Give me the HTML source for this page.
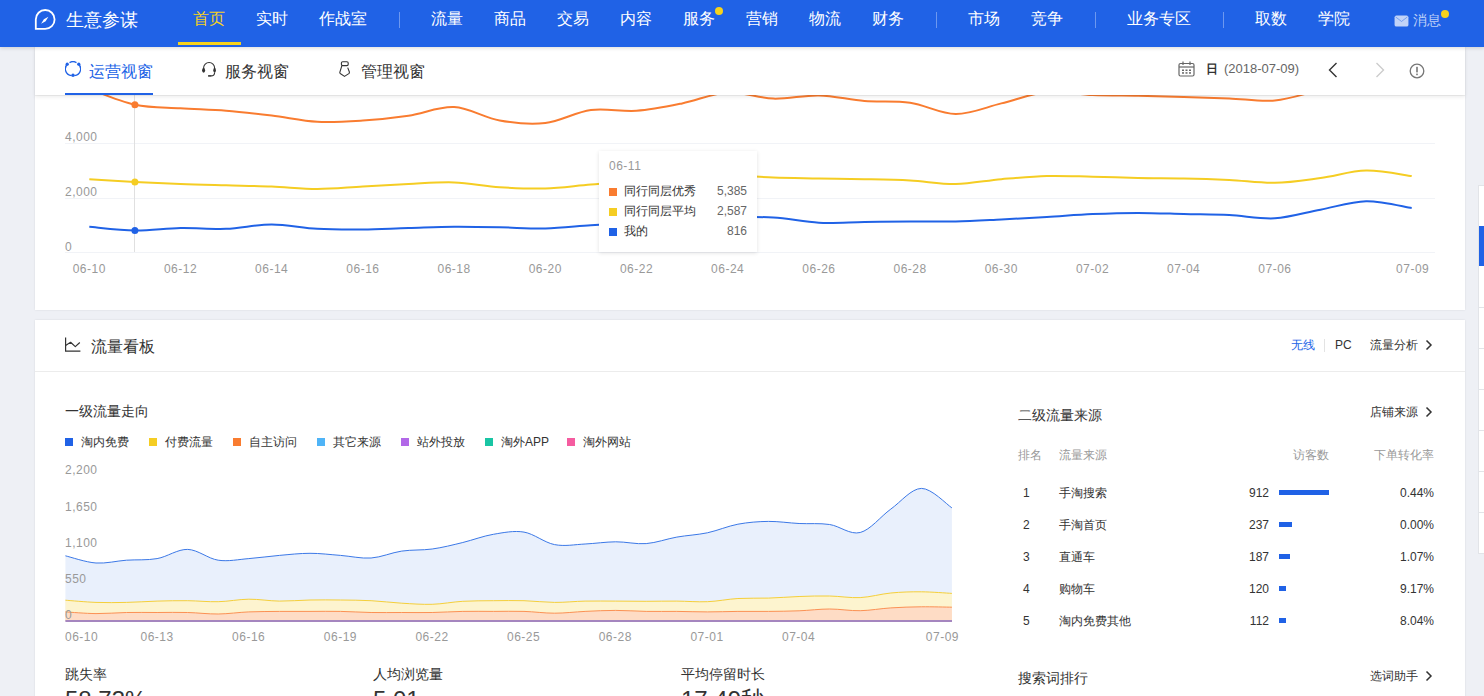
<!DOCTYPE html>
<html><head><meta charset="utf-8">
<style>
*{margin:0;padding:0;box-sizing:border-box}
html,body{width:1484px;height:696px;overflow:hidden}
body{background:#eef0f5;font-family:"Liberation Sans",sans-serif;position:relative;color:#333}
.abs{position:absolute}
#nav{position:absolute;left:0;top:0;width:1484px;height:47px;background:#2062e6;z-index:10;box-shadow:0 1px 4px rgba(0,0,0,.15)}
#nav .it{position:absolute;top:9px;font-size:16px;line-height:20px;color:#fff;white-space:nowrap}
#nav .sep{position:absolute;top:12px;width:1px;height:16px;background:rgba(255,255,255,.35)}
#nav .dot{position:absolute;width:8px;height:8px;border-radius:50%;background:#f7d21c}
#tabs{position:absolute;left:35px;top:47px;width:1430px;height:48px;background:#fff;z-index:5;box-shadow:0 1px 0 rgba(0,0,0,.05),0 2px 4px rgba(0,0,0,.08)}
.card{position:absolute;background:#fff;box-shadow:0 0 2px rgba(0,0,0,.1)}
.t12{font-size:12px;line-height:14px;white-space:nowrap}
.t13{font-size:13px;line-height:15px;white-space:nowrap}
.t14{font-size:14px;line-height:16px;white-space:nowrap}
.t16{font-size:16px;line-height:18px;white-space:nowrap}
.gray{color:#999}
.num{letter-spacing:.5px}
svg{position:absolute;left:0;top:0}
</style></head><body>

<!-- card 1 (chart, scrolled) -->
<div class="card" style="left:35px;top:0;width:1430px;height:310px"></div>
<svg width="1484" height="696" style="z-index:1">
  <g stroke="#f1f3f7" stroke-width="1">
    <line x1="65" y1="143.5" x2="1435" y2="143.5"/>
    <line x1="65" y1="198.5" x2="1435" y2="198.5"/>
    <line x1="65" y1="252.5" x2="1435" y2="252.5"/>
  </g>
  <line x1="134.5" y1="95" x2="134.5" y2="252" stroke="#e0e0e0" stroke-width="1"/>
  <path d="M89.3,89.0 C96.9,91.6 119.7,101.5 134.9,104.7 C150.1,107.9 165.3,107.3 180.5,108.3 C195.7,109.3 210.9,109.6 226.1,110.8 C241.3,112.0 256.5,113.8 271.7,115.6 C286.9,117.4 302.1,121.0 317.3,121.8 C332.5,122.6 347.7,121.5 362.9,120.5 C378.1,119.5 393.3,117.9 408.5,115.7 C423.7,113.5 438.9,106.3 454.1,107.1 C469.3,107.9 484.5,117.8 499.7,120.5 C514.9,123.2 530.1,124.8 545.3,123.0 C560.5,121.2 575.7,112.0 590.9,110.0 C606.1,108.0 621.3,111.9 636.5,110.8 C651.7,109.7 666.9,106.5 682.1,103.4 C697.3,100.4 712.5,93.3 727.7,92.5 C742.9,91.7 758.1,98.1 773.3,98.6 C788.5,99.1 803.7,95.0 818.9,95.4 C834.1,95.8 849.3,99.8 864.5,101.0 C879.7,102.2 894.9,100.5 910.1,102.7 C925.3,104.9 940.5,113.9 955.7,114.0 C970.9,114.1 986.1,107.1 1001.3,103.4 C1016.5,99.7 1031.7,93.4 1046.9,92.0 C1062.1,90.6 1077.3,94.4 1092.5,95.0 C1107.7,95.6 1122.9,95.5 1138.1,95.8 C1153.3,96.1 1168.5,96.5 1183.7,96.9 C1198.9,97.3 1214.1,97.8 1229.3,98.4 C1244.5,99.0 1259.7,101.9 1274.9,100.5 C1290.1,99.1 1305.3,93.4 1320.5,90.0 C1335.7,86.6 1350.9,80.8 1366.1,80.0 C1381.3,79.2 1404.1,84.2 1411.7,85.0" fill="none" stroke="#f97c30" stroke-width="2"/>
  <path d="M89.3,179.2 C96.9,179.6 119.7,181.1 134.9,181.9 C150.1,182.7 165.3,183.4 180.5,184.0 C195.7,184.6 210.9,184.9 226.1,185.3 C241.3,185.7 256.5,185.9 271.7,186.5 C286.9,187.1 302.1,189.0 317.3,189.0 C332.5,189.0 347.7,187.3 362.9,186.5 C378.1,185.7 393.3,184.7 408.5,184.0 C423.7,183.3 438.9,181.9 454.1,182.4 C469.3,182.9 484.5,186.2 499.7,187.2 C514.9,188.2 530.1,188.9 545.3,188.5 C560.5,188.1 575.7,185.7 590.9,184.5 C606.1,183.3 621.3,182.7 636.5,181.5 C651.7,180.3 666.9,178.5 682.1,177.5 C697.3,176.5 712.5,175.5 727.7,175.5 C742.9,175.5 758.1,177.0 773.3,177.5 C788.5,178.0 803.7,178.1 818.9,178.4 C834.1,178.7 849.3,178.8 864.5,179.2 C879.7,179.5 894.9,179.7 910.1,180.5 C925.3,181.3 940.5,184.2 955.7,184.0 C970.9,183.8 986.1,180.5 1001.3,179.2 C1016.5,177.9 1031.7,176.4 1046.9,176.0 C1062.1,175.6 1077.3,176.4 1092.5,176.7 C1107.7,177.0 1122.9,177.7 1138.1,178.0 C1153.3,178.3 1168.5,178.1 1183.7,178.4 C1198.9,178.7 1214.1,179.2 1229.3,179.9 C1244.5,180.6 1259.7,183.1 1274.9,182.8 C1290.1,182.5 1305.3,180.0 1320.5,178.0 C1335.7,176.0 1350.9,170.9 1366.1,170.6 C1381.3,170.3 1404.1,175.1 1411.7,176.0" fill="none" stroke="#f5cd23" stroke-width="2"/>
  <path d="M89.3,226.8 C96.9,227.4 119.7,230.3 134.9,230.5 C150.1,230.7 165.3,228.3 180.5,228.0 C195.7,227.7 210.9,229.4 226.1,228.8 C241.3,228.2 256.5,224.4 271.7,224.4 C286.9,224.4 302.1,228.0 317.3,228.8 C332.5,229.7 347.7,229.6 362.9,229.5 C378.1,229.4 393.3,228.4 408.5,228.0 C423.7,227.6 438.9,226.9 454.1,226.8 C469.3,226.7 484.5,227.0 499.7,227.3 C514.9,227.6 530.1,228.8 545.3,228.5 C560.5,228.2 575.7,226.3 590.9,225.3 C606.1,224.3 621.3,223.4 636.5,222.5 C651.7,221.6 666.9,220.8 682.1,220.0 C697.3,219.2 712.5,217.9 727.7,217.5 C742.9,217.1 758.1,216.6 773.3,217.5 C788.5,218.4 803.7,221.9 818.9,222.7 C834.1,223.4 849.3,222.2 864.5,222.0 C879.7,221.8 894.9,221.5 910.1,221.4 C925.3,221.3 940.5,221.7 955.7,221.4 C970.9,221.1 986.1,220.2 1001.3,219.5 C1016.5,218.8 1031.7,217.9 1046.9,217.0 C1062.1,216.1 1077.3,214.8 1092.5,214.1 C1107.7,213.4 1122.9,212.9 1138.1,212.9 C1153.3,212.9 1168.5,213.6 1183.7,214.0 C1198.9,214.4 1214.1,214.4 1229.3,215.1 C1244.5,215.8 1259.7,219.2 1274.9,218.3 C1290.1,217.4 1305.3,212.5 1320.5,209.7 C1335.7,206.8 1350.9,201.5 1366.1,201.2 C1381.3,200.9 1404.1,206.9 1411.7,208.0" fill="none" stroke="#2062e6" stroke-width="2"/>
  <circle cx="134.9" cy="104.7" r="3.5" fill="#f97c30"/>
  <circle cx="134.9" cy="181.9" r="3.5" fill="#f5cd23"/>
  <circle cx="134.9" cy="230.5" r="3.5" fill="#2062e6"/>
</svg>

<div class="abs t12 gray num" style="left:65px;top:130px">4,000</div>
<div class="abs t12 gray num" style="left:65px;top:185px">2,000</div>
<div class="abs t12 gray num" style="left:65px;top:240px">0</div>
<div class="abs t12 gray num" style="left:59.3px;top:262px;width:60px;text-align:center">06-10</div>
<div class="abs t12 gray num" style="left:150.5px;top:262px;width:60px;text-align:center">06-12</div>
<div class="abs t12 gray num" style="left:241.7px;top:262px;width:60px;text-align:center">06-14</div>
<div class="abs t12 gray num" style="left:332.9px;top:262px;width:60px;text-align:center">06-16</div>
<div class="abs t12 gray num" style="left:424.1px;top:262px;width:60px;text-align:center">06-18</div>
<div class="abs t12 gray num" style="left:515.3px;top:262px;width:60px;text-align:center">06-20</div>
<div class="abs t12 gray num" style="left:606.5px;top:262px;width:60px;text-align:center">06-22</div>
<div class="abs t12 gray num" style="left:697.7px;top:262px;width:60px;text-align:center">06-24</div>
<div class="abs t12 gray num" style="left:788.9px;top:262px;width:60px;text-align:center">06-26</div>
<div class="abs t12 gray num" style="left:880.1px;top:262px;width:60px;text-align:center">06-28</div>
<div class="abs t12 gray num" style="left:971.3px;top:262px;width:60px;text-align:center">06-30</div>
<div class="abs t12 gray num" style="left:1062.5px;top:262px;width:60px;text-align:center">07-02</div>
<div class="abs t12 gray num" style="left:1153.7px;top:262px;width:60px;text-align:center">07-04</div>
<div class="abs t12 gray num" style="left:1244.9px;top:262px;width:60px;text-align:center">07-06</div>
<div class="abs t12 gray num" style="left:1382.7px;top:262px;width:60px;text-align:center">07-09</div>
<div class="abs" style="left:599px;top:151px;width:158px;height:101px;background:#fff;box-shadow:0 1px 4px rgba(0,0,0,.12);z-index:2">
  <div class="abs t12 gray num" style="left:10px;top:8px">06-11</div>
  <div class="abs" style="left:10px;top:37px;width:8px;height:8px;background:#f97c30"></div>
  <div class="abs t12" style="left:25px;top:33px;color:#333">同行同层优秀</div>
  <div class="abs t12" style="right:10px;top:33px;color:#666">5,385</div>
  <div class="abs" style="left:10px;top:57px;width:8px;height:8px;background:#f5cd23"></div>
  <div class="abs t12" style="left:25px;top:53px;color:#333">同行同层平均</div>
  <div class="abs t12" style="right:10px;top:53px;color:#666">2,587</div>
  <div class="abs" style="left:10px;top:77px;width:8px;height:8px;background:#2062e6"></div>
  <div class="abs t12" style="left:25px;top:73px;color:#333">我的</div>
  <div class="abs t12" style="right:10px;top:73px;color:#666">816</div>
</div>
<div class="card" style="left:35px;top:320px;width:1430px;height:400px;z-index:1">
  <svg width="18" height="16" style="left:29px;top:17px" viewBox="0 0 18 16">
    <path d="M1.6,0.6 L1.6,14.2 L16.4,14.2" fill="none" stroke="#333" stroke-width="1.2"/>
    <path d="M1.6,8.4 L6.6,5.3 L11.3,9.6 L15.8,5.5" fill="none" stroke="#333" stroke-width="1.2" stroke-linejoin="round"/>
  </svg>
  <div class="abs t16" style="left:56px;top:18px;color:#333">流量看板</div>
  <div class="abs t12" style="left:1256px;top:18px;color:#2062e6">无线</div>
  <div class="abs" style="left:1289px;top:19px;width:1px;height:13px;background:#e3e3e3"></div>
  <div class="abs t12" style="left:1300px;top:18px;color:#333">PC</div>
  <div class="abs t12" style="left:1335px;top:18px;color:#333">流量分析</div>
  <svg width="8" height="12" style="left:1390px;top:19px" viewBox="0 0 8 12"><path d="M1.5,1.5 L6,6 L1.5,10.5" fill="none" stroke="#333" stroke-width="1.5"/></svg>
  <div class="abs" style="left:0;top:51px;width:1430px;height:1px;background:#ececec"></div>

  <div class="abs t14" style="left:30px;top:83px;color:#333">一级流量走向</div>
  <div class="abs" style="left:30px;top:118px;width:8px;height:8px;background:#2062e6"></div>
  <div class="abs t12" style="left:46px;top:115px;color:#333">淘内免费</div>
  <div class="abs" style="left:114px;top:118px;width:8px;height:8px;background:#f5cd23"></div>
  <div class="abs t12" style="left:130px;top:115px;color:#333">付费流量</div>
  <div class="abs" style="left:198px;top:118px;width:8px;height:8px;background:#f97c30"></div>
  <div class="abs t12" style="left:214px;top:115px;color:#333">自主访问</div>
  <div class="abs" style="left:282px;top:118px;width:8px;height:8px;background:#4fb4f7"></div>
  <div class="abs t12" style="left:298px;top:115px;color:#333">其它来源</div>
  <div class="abs" style="left:366px;top:118px;width:8px;height:8px;background:#b268e8"></div>
  <div class="abs t12" style="left:382px;top:115px;color:#333">站外投放</div>
  <div class="abs" style="left:450px;top:118px;width:8px;height:8px;background:#19c5a4"></div>
  <div class="abs t12" style="left:466px;top:115px;color:#333">淘外APP</div>
  <div class="abs" style="left:532px;top:118px;width:8px;height:8px;background:#f55ca0"></div>
  <div class="abs t12" style="left:548px;top:115px;color:#333">淘外网站</div>
  <div class="abs t12 gray num" style="left:30px;top:310px">06-10</div>
  <div class="abs t12 gray num" style="left:92.1px;top:310px;width:60px;text-align:center">06-13</div>
  <div class="abs t12 gray num" style="left:183.7px;top:310px;width:60px;text-align:center">06-16</div>
  <div class="abs t12 gray num" style="left:275.4px;top:310px;width:60px;text-align:center">06-19</div>
  <div class="abs t12 gray num" style="left:367.0px;top:310px;width:60px;text-align:center">06-22</div>
  <div class="abs t12 gray num" style="left:458.6px;top:310px;width:60px;text-align:center">06-25</div>
  <div class="abs t12 gray num" style="left:550.3px;top:310px;width:60px;text-align:center">06-28</div>
  <div class="abs t12 gray num" style="left:642.0px;top:310px;width:60px;text-align:center">07-01</div>
  <div class="abs t12 gray num" style="left:733.6px;top:310px;width:60px;text-align:center">07-04</div>
  <div class="abs t12 gray num" style="left:890.8px;top:310px">07-09</div>
  <div class="abs t14" style="left:30px;top:346px;color:#333">跳失率</div>
  <div class="abs" style="left:30px;top:366px;font-size:24px;line-height:28px;color:#333">58.73%</div>
  <div class="abs t14" style="left:338px;top:346px;color:#333">人均浏览量</div>
  <div class="abs" style="left:338px;top:366px;font-size:24px;line-height:28px;color:#333">5.01</div>
  <div class="abs t14" style="left:646px;top:346px;color:#333">平均停留时长</div>
  <div class="abs" style="left:646px;top:366px;font-size:24px;line-height:28px;color:#333">17.49秒</div>

  <div class="abs t14" style="left:983px;top:87px;color:#333">二级流量来源</div>
  <div class="abs t12" style="left:1335px;top:85px;color:#333">店铺来源</div>
  <svg width="8" height="12" style="left:1390px;top:86px" viewBox="0 0 8 12"><path d="M1.5,1.5 L6,6 L1.5,10.5" fill="none" stroke="#333" stroke-width="1.5"/></svg>
  <div class="abs t12 gray" style="left:983px;top:128px">排名</div>
  <div class="abs t12 gray" style="left:1024px;top:128px">流量来源</div>
  <div class="abs t12 gray" style="left:1258px;top:128px">访客数</div>
  <div class="abs t12 gray" style="left:1339px;top:128px">下单转化率</div>
  <div class="abs t12" style="left:988px;top:165.5px;color:#333">1</div>
  <div class="abs t12" style="left:1024px;top:165.5px;color:#333">手淘搜索</div>
  <div class="abs t12" style="left:1174px;width:60px;text-align:right;top:165.5px;color:#333">912</div>
  <div class="abs" style="left:1244px;top:170.0px;width:50px;height:5px;background:#2062e6"></div>
  <div class="abs t12" style="left:1339px;width:60px;text-align:right;top:165.5px;color:#333">0.44%</div>
  <div class="abs t12" style="left:988px;top:197.5px;color:#333">2</div>
  <div class="abs t12" style="left:1024px;top:197.5px;color:#333">手淘首页</div>
  <div class="abs t12" style="left:1174px;width:60px;text-align:right;top:197.5px;color:#333">237</div>
  <div class="abs" style="left:1244px;top:202.0px;width:13px;height:5px;background:#2062e6"></div>
  <div class="abs t12" style="left:1339px;width:60px;text-align:right;top:197.5px;color:#333">0.00%</div>
  <div class="abs t12" style="left:988px;top:229.5px;color:#333">3</div>
  <div class="abs t12" style="left:1024px;top:229.5px;color:#333">直通车</div>
  <div class="abs t12" style="left:1174px;width:60px;text-align:right;top:229.5px;color:#333">187</div>
  <div class="abs" style="left:1244px;top:234.0px;width:11px;height:5px;background:#2062e6"></div>
  <div class="abs t12" style="left:1339px;width:60px;text-align:right;top:229.5px;color:#333">1.07%</div>
  <div class="abs t12" style="left:988px;top:261.5px;color:#333">4</div>
  <div class="abs t12" style="left:1024px;top:261.5px;color:#333">购物车</div>
  <div class="abs t12" style="left:1174px;width:60px;text-align:right;top:261.5px;color:#333">120</div>
  <div class="abs" style="left:1244px;top:266.0px;width:7px;height:5px;background:#2062e6"></div>
  <div class="abs t12" style="left:1339px;width:60px;text-align:right;top:261.5px;color:#333">9.17%</div>
  <div class="abs t12" style="left:988px;top:293.5px;color:#333">5</div>
  <div class="abs t12" style="left:1024px;top:293.5px;color:#333">淘内免费其他</div>
  <div class="abs t12" style="left:1174px;width:60px;text-align:right;top:293.5px;color:#333">112</div>
  <div class="abs" style="left:1244px;top:298.0px;width:7px;height:5px;background:#2062e6"></div>
  <div class="abs t12" style="left:1339px;width:60px;text-align:right;top:293.5px;color:#333">8.04%</div>
  <div class="abs t14" style="left:983px;top:350px;color:#333">搜索词排行</div>
  <div class="abs t12" style="left:1335px;top:349px;color:#333">选词助手</div>
  <svg width="8" height="12" style="left:1390px;top:350px" viewBox="0 0 8 12"><path d="M1.5,1.5 L6,6 L1.5,10.5" fill="none" stroke="#333" stroke-width="1.5"/></svg>
</div>
<svg width="1484" height="696" style="z-index:2">
  <path d="M65.4,555.8 C70.5,557.0 85.8,562.3 96.0,563.0 C106.2,563.7 116.4,560.9 126.5,560.2 C136.7,559.5 146.9,560.4 157.1,558.6 C167.3,556.8 177.5,549.1 187.7,549.4 C197.9,549.7 208.1,558.7 218.2,560.2 C228.4,561.7 238.6,559.4 248.8,558.6 C259.0,557.8 269.2,556.3 279.4,555.4 C289.6,554.5 299.8,553.3 310.0,553.3 C320.2,553.3 330.3,554.6 340.5,555.4 C350.7,556.2 360.9,558.7 371.1,558.0 C381.3,557.3 391.5,552.6 401.7,551.1 C411.9,549.6 422.1,550.4 432.2,549.0 C442.4,547.6 452.6,545.0 462.8,542.5 C473.0,540.0 483.2,536.0 493.4,534.3 C503.6,532.6 513.8,530.4 524.0,532.1 C534.1,533.8 544.3,542.6 554.5,544.6 C564.7,546.6 574.9,544.5 585.1,544.0 C595.3,543.5 605.5,541.9 615.7,541.8 C625.8,541.7 636.0,544.4 646.2,543.6 C656.4,542.8 666.6,538.9 676.8,537.1 C687.0,535.3 697.2,534.9 707.4,532.8 C717.6,530.6 727.8,526.1 737.9,524.2 C748.1,522.3 758.3,521.5 768.5,521.4 C778.7,521.3 788.9,523.0 799.1,523.5 C809.3,524.0 819.5,523.0 829.6,524.5 C839.8,526.0 850.0,535.1 860.2,532.5 C870.4,529.9 880.6,516.5 890.8,509.1 C901.0,501.8 911.2,488.6 921.4,488.4 C931.5,488.2 946.8,504.6 951.9,507.9 L951.9,621.0 L65.4,621.0 Z" fill="#e9f0fc"/>
  <path d="M65.4,600.2 C70.5,600.6 85.8,602.0 96.0,602.4 C106.2,602.8 116.4,602.6 126.5,602.4 C136.7,602.2 146.9,601.4 157.1,601.1 C167.3,600.8 177.5,600.6 187.7,600.7 C197.9,600.8 208.1,602.0 218.2,601.7 C228.4,601.5 238.6,599.3 248.8,599.2 C259.0,599.1 269.2,601.0 279.4,601.1 C289.6,601.2 299.8,600.2 310.0,600.0 C320.2,599.8 330.3,599.9 340.5,600.0 C350.7,600.1 360.9,600.2 371.1,600.7 C381.3,601.2 391.5,602.6 401.7,603.2 C411.9,603.8 422.1,604.6 432.2,604.3 C442.4,604.0 452.6,601.9 462.8,601.3 C473.0,600.7 483.2,600.8 493.4,600.7 C503.6,600.6 513.8,600.4 524.0,600.7 C534.1,601.0 544.3,602.3 554.5,602.4 C564.7,602.5 574.9,601.3 585.1,601.1 C595.3,600.9 605.5,601.1 615.7,601.1 C625.8,601.1 636.0,601.3 646.2,601.3 C656.4,601.3 666.6,601.0 676.8,601.1 C687.0,601.2 697.2,602.1 707.4,601.7 C717.6,601.3 727.8,599.1 737.9,598.5 C748.1,597.9 758.3,598.4 768.5,598.1 C778.7,597.8 788.9,596.9 799.1,596.5 C809.3,596.1 819.5,595.8 829.6,596.0 C839.8,596.2 850.0,598.1 860.2,597.6 C870.4,597.1 880.6,594.0 890.8,593.0 C901.0,592.0 911.2,591.7 921.4,591.8 C931.5,591.9 946.8,593.1 951.9,593.4 L951.9,621.0 L65.4,621.0 Z" fill="#fdf4cf"/>
  <path d="M65.4,611.9 C70.5,612.2 85.8,613.5 96.0,613.6 C106.2,613.7 116.4,612.7 126.5,612.5 C136.7,612.3 146.9,612.5 157.1,612.5 C167.3,612.5 177.5,612.2 187.7,612.5 C197.9,612.8 208.1,614.1 218.2,614.0 C228.4,613.9 238.6,612.3 248.8,611.9 C259.0,611.5 269.2,611.5 279.4,611.4 C289.6,611.3 299.8,611.4 310.0,611.4 C320.2,611.4 330.3,611.2 340.5,611.4 C350.7,611.6 360.9,612.3 371.1,612.5 C381.3,612.7 391.5,612.5 401.7,612.5 C411.9,612.5 422.1,612.7 432.2,612.5 C442.4,612.3 452.6,611.6 462.8,611.4 C473.0,611.2 483.2,611.4 493.4,611.4 C503.6,611.4 513.8,611.1 524.0,611.4 C534.1,611.7 544.3,613.2 554.5,613.2 C564.7,613.2 574.9,611.9 585.1,611.4 C595.3,610.9 605.5,610.4 615.7,610.4 C625.8,610.4 636.0,611.2 646.2,611.4 C656.4,611.6 666.6,611.3 676.8,611.4 C687.0,611.5 697.2,611.9 707.4,611.9 C717.6,611.9 727.8,611.5 737.9,611.4 C748.1,611.3 758.3,611.5 768.5,611.4 C778.7,611.3 788.9,611.2 799.1,610.8 C809.3,610.4 819.5,609.0 829.6,609.0 C839.8,609.0 850.0,610.9 860.2,610.7 C870.4,610.5 880.6,608.5 890.8,607.9 C901.0,607.2 911.2,606.9 921.4,606.8 C931.5,606.7 946.8,607.1 951.9,607.2 L951.9,621.0 L65.4,621.0 Z" fill="#fedcc5"/>
  <path d="M65.4,555.8 C70.5,557.0 85.8,562.3 96.0,563.0 C106.2,563.7 116.4,560.9 126.5,560.2 C136.7,559.5 146.9,560.4 157.1,558.6 C167.3,556.8 177.5,549.1 187.7,549.4 C197.9,549.7 208.1,558.7 218.2,560.2 C228.4,561.7 238.6,559.4 248.8,558.6 C259.0,557.8 269.2,556.3 279.4,555.4 C289.6,554.5 299.8,553.3 310.0,553.3 C320.2,553.3 330.3,554.6 340.5,555.4 C350.7,556.2 360.9,558.7 371.1,558.0 C381.3,557.3 391.5,552.6 401.7,551.1 C411.9,549.6 422.1,550.4 432.2,549.0 C442.4,547.6 452.6,545.0 462.8,542.5 C473.0,540.0 483.2,536.0 493.4,534.3 C503.6,532.6 513.8,530.4 524.0,532.1 C534.1,533.8 544.3,542.6 554.5,544.6 C564.7,546.6 574.9,544.5 585.1,544.0 C595.3,543.5 605.5,541.9 615.7,541.8 C625.8,541.7 636.0,544.4 646.2,543.6 C656.4,542.8 666.6,538.9 676.8,537.1 C687.0,535.3 697.2,534.9 707.4,532.8 C717.6,530.6 727.8,526.1 737.9,524.2 C748.1,522.3 758.3,521.5 768.5,521.4 C778.7,521.3 788.9,523.0 799.1,523.5 C809.3,524.0 819.5,523.0 829.6,524.5 C839.8,526.0 850.0,535.1 860.2,532.5 C870.4,529.9 880.6,516.5 890.8,509.1 C901.0,501.8 911.2,488.6 921.4,488.4 C931.5,488.2 946.8,504.6 951.9,507.9" fill="none" stroke="#3b78e7" stroke-width="1"/>
  <path d="M65.4,600.2 C70.5,600.6 85.8,602.0 96.0,602.4 C106.2,602.8 116.4,602.6 126.5,602.4 C136.7,602.2 146.9,601.4 157.1,601.1 C167.3,600.8 177.5,600.6 187.7,600.7 C197.9,600.8 208.1,602.0 218.2,601.7 C228.4,601.5 238.6,599.3 248.8,599.2 C259.0,599.1 269.2,601.0 279.4,601.1 C289.6,601.2 299.8,600.2 310.0,600.0 C320.2,599.8 330.3,599.9 340.5,600.0 C350.7,600.1 360.9,600.2 371.1,600.7 C381.3,601.2 391.5,602.6 401.7,603.2 C411.9,603.8 422.1,604.6 432.2,604.3 C442.4,604.0 452.6,601.9 462.8,601.3 C473.0,600.7 483.2,600.8 493.4,600.7 C503.6,600.6 513.8,600.4 524.0,600.7 C534.1,601.0 544.3,602.3 554.5,602.4 C564.7,602.5 574.9,601.3 585.1,601.1 C595.3,600.9 605.5,601.1 615.7,601.1 C625.8,601.1 636.0,601.3 646.2,601.3 C656.4,601.3 666.6,601.0 676.8,601.1 C687.0,601.2 697.2,602.1 707.4,601.7 C717.6,601.3 727.8,599.1 737.9,598.5 C748.1,597.9 758.3,598.4 768.5,598.1 C778.7,597.8 788.9,596.9 799.1,596.5 C809.3,596.1 819.5,595.8 829.6,596.0 C839.8,596.2 850.0,598.1 860.2,597.6 C870.4,597.1 880.6,594.0 890.8,593.0 C901.0,592.0 911.2,591.7 921.4,591.8 C931.5,591.9 946.8,593.1 951.9,593.4" fill="none" stroke="#f5cf3a" stroke-width="1"/>
  <path d="M65.4,611.9 C70.5,612.2 85.8,613.5 96.0,613.6 C106.2,613.7 116.4,612.7 126.5,612.5 C136.7,612.3 146.9,612.5 157.1,612.5 C167.3,612.5 177.5,612.2 187.7,612.5 C197.9,612.8 208.1,614.1 218.2,614.0 C228.4,613.9 238.6,612.3 248.8,611.9 C259.0,611.5 269.2,611.5 279.4,611.4 C289.6,611.3 299.8,611.4 310.0,611.4 C320.2,611.4 330.3,611.2 340.5,611.4 C350.7,611.6 360.9,612.3 371.1,612.5 C381.3,612.7 391.5,612.5 401.7,612.5 C411.9,612.5 422.1,612.7 432.2,612.5 C442.4,612.3 452.6,611.6 462.8,611.4 C473.0,611.2 483.2,611.4 493.4,611.4 C503.6,611.4 513.8,611.1 524.0,611.4 C534.1,611.7 544.3,613.2 554.5,613.2 C564.7,613.2 574.9,611.9 585.1,611.4 C595.3,610.9 605.5,610.4 615.7,610.4 C625.8,610.4 636.0,611.2 646.2,611.4 C656.4,611.6 666.6,611.3 676.8,611.4 C687.0,611.5 697.2,611.9 707.4,611.9 C717.6,611.9 727.8,611.5 737.9,611.4 C748.1,611.3 758.3,611.5 768.5,611.4 C778.7,611.3 788.9,611.2 799.1,610.8 C809.3,610.4 819.5,609.0 829.6,609.0 C839.8,609.0 850.0,610.9 860.2,610.7 C870.4,610.5 880.6,608.5 890.8,607.9 C901.0,607.2 911.2,606.9 921.4,606.8 C931.5,606.7 946.8,607.1 951.9,607.2" fill="none" stroke="#fb9154" stroke-width="1"/>
  <line x1="65.4" y1="621" x2="952" y2="621" stroke="#a586bf" stroke-width="2"/>
</svg>
<div class="abs t12 gray num" style="left:65px;top:463.0px;z-index:3">2,200</div>
<div class="abs t12 gray num" style="left:65px;top:499.5px;z-index:3">1,650</div>
<div class="abs t12 gray num" style="left:65px;top:536.0px;z-index:3">1,100</div>
<div class="abs t12 gray num" style="left:65px;top:572.0px;z-index:3">550</div>
<div class="abs t12 gray num" style="left:65px;top:608.0px;z-index:3">0</div>
<div class="abs" style="left:1478px;top:185px;width:20px;height:369px;background:#fff;border:1px solid #e2e4e8;z-index:3">
  <div class="abs" style="left:0;top:40px;width:20px;height:40px;background:#2062e6"></div>
  <div class="abs" style="left:0;top:121px;width:20px;height:1px;background:#e2e4e8"></div>
  <div class="abs" style="left:0;top:162px;width:20px;height:1px;background:#e2e4e8"></div>
  <div class="abs" style="left:0;top:203px;width:20px;height:1px;background:#e2e4e8"></div>
  <div class="abs" style="left:0;top:244px;width:20px;height:1px;background:#e2e4e8"></div>
  <div class="abs" style="left:0;top:285px;width:20px;height:1px;background:#e2e4e8"></div>
  <div class="abs" style="left:0;top:326px;width:20px;height:1px;background:#e2e4e8"></div>
</div>
<div id="tabs">
  <svg width="16" height="16" style="left:30px;top:14px" viewBox="0 0 16 16">
    <path d="M3.2,2.6 A6.6,6.6 0 0 0 6.5,14.6 M9.5,14.6 A6.6,6.6 0 0 0 12.8,2.6 M4.5,1.6 A6.6,6.6 0 0 1 11.5,1.6" fill="none" stroke="#2062e6" stroke-width="1.3"/>
    <circle cx="2.2" cy="3.2" r="1.6" fill="#2062e6"/><circle cx="13.8" cy="3.2" r="1.6" fill="#2062e6"/><circle cx="8" cy="14.2" r="1.7" fill="#2062e6"/>
  </svg>
  <div class="abs t16" style="left:54px;top:16px;color:#2062e6">运营视窗</div>
  <div class="abs" style="left:30px;top:46px;width:88px;height:2px;background:#2062e6"></div>
  <svg width="16" height="16" style="left:166px;top:14px" viewBox="0 0 16 16">
    <path d="M2.6,8 L2.6,7 A5.5,5.5 0 0 1 13.6,7 L13.6,8 M13.6,11.5 Q13.6,14.9 10,14.9" fill="none" stroke="#333" stroke-width="1.1"/>
    <ellipse cx="2.6" cy="9.3" rx="1.5" ry="2.4" fill="#333"/><ellipse cx="13.6" cy="9.3" rx="1.3" ry="2.4" fill="#333"/>
    <rect x="7.1" y="14.1" width="3" height="1.6" fill="#333"/>
  </svg>
  <div class="abs t16" style="left:190px;top:16px;color:#333">服务视窗</div>
  <svg width="14" height="17" style="left:303px;top:14px" viewBox="0 0 14 17">
    <rect x="3.4" y="0.7" width="6.8" height="3.9" rx="1.3" fill="none" stroke="#333" stroke-width="1.1"/>
    <path d="M3.9,4.6 L1.8,11.4 Q1.8,12.2 2.6,12.8 L6.5,15.4 L10.8,12.6 Q11.6,12 11.4,11 L9.7,6.6" fill="none" stroke="#333" stroke-width="1.1" stroke-linejoin="round"/>
  </svg>
  <div class="abs t16" style="left:326px;top:16px;color:#333">管理视窗</div>
  <svg width="17" height="16" style="left:1143px;top:14px" viewBox="0 0 17 16">
    <rect x="1" y="2.5" width="15" height="12.5" rx="1.5" fill="none" stroke="#666" stroke-width="1.2"/>
    <line x1="1" y1="6" x2="16" y2="6" stroke="#666" stroke-width="1.2"/>
    <line x1="5" y1="0.5" x2="5" y2="4" stroke="#666" stroke-width="1.2"/><line x1="12" y1="0.5" x2="12" y2="4" stroke="#666" stroke-width="1.2"/>
    <g fill="#666"><rect x="4" y="8.5" width="2" height="1.5"/><rect x="7.5" y="8.5" width="2" height="1.5"/><rect x="11" y="8.5" width="2" height="1.5"/>
    <rect x="4" y="11.2" width="2" height="1.5"/><rect x="7.5" y="11.2" width="2" height="1.5"/><rect x="11" y="11.2" width="2" height="1.5"/></g>
  </svg>
  <div class="abs t12" style="left:1171px;top:15px;color:#333;font-weight:bold">日</div>
  <div class="abs t13" style="left:1189px;top:14px;color:#666">(2018-07-09)</div>
  <svg width="10" height="16" style="left:1293px;top:15px" viewBox="0 0 10 16"><path d="M8.5,1 L1.5,8 L8.5,15" fill="none" stroke="#333" stroke-width="1.4"/></svg>
  <svg width="10" height="16" style="left:1340px;top:15px" viewBox="0 0 10 16"><path d="M1.5,1 L8.5,8 L1.5,15" fill="none" stroke="#ccc" stroke-width="1.4"/></svg>
  <svg width="16" height="16" style="left:1374px;top:16px" viewBox="0 0 16 16">
    <circle cx="8" cy="8" r="6.8" fill="none" stroke="#777" stroke-width="1.3"/>
    <rect x="7.2" y="3.8" width="1.6" height="5.6" fill="#777"/><rect x="7.2" y="10.6" width="1.6" height="1.6" fill="#777"/>
  </svg>
</div>
<div id="nav">
  <svg width="24" height="24" style="left:34px;top:8px" viewBox="0 0 24 24">
    <path d="M1.8,20.8 L1.8,11.4 A9.4,9.4 0 1 1 11.2,20.8 Z" fill="none" stroke="#fff" stroke-width="1.8"/>
    <path d="M7.1,15.7 L11.64,13.2 L14.4,8.8 L9.86,11.3 Z" fill="#fff"/>
  </svg>
  <div class="it" style="left:66px;top:9px;font-size:18px;line-height:22px">生意参谋</div>
  <div class="it" style="left:193px;color:#f7d21c">首页</div>
  <div class="abs" style="left:178px;top:42px;width:63px;height:3px;background:#f7d21c"></div>
  <div class="it" style="left:256px">实时</div>
  <div class="it" style="left:319px">作战室</div>
  <div class="sep" style="left:399px"></div>
  <div class="it" style="left:431px">流量</div>
  <div class="it" style="left:494px">商品</div>
  <div class="it" style="left:557px">交易</div>
  <div class="it" style="left:620px">内容</div>
  <div class="it" style="left:683px">服务</div>
  <div class="dot" style="left:715px;top:7px"></div>
  <div class="it" style="left:746px">营销</div>
  <div class="it" style="left:809px">物流</div>
  <div class="it" style="left:872px">财务</div>
  <div class="sep" style="left:936px"></div>
  <div class="it" style="left:968px">市场</div>
  <div class="it" style="left:1031px">竞争</div>
  <div class="sep" style="left:1095px"></div>
  <div class="it" style="left:1127px">业务专区</div>
  <div class="sep" style="left:1223px"></div>
  <div class="it" style="left:1255px">取数</div>
  <div class="it" style="left:1318px">学院</div>
  <svg width="15" height="12" style="left:1394px;top:15px" viewBox="0 0 16 13">
    <rect x="0.5" y="0.5" width="15" height="12" rx="2" fill="rgba(255,255,255,.72)"/>
    <path d="M1.5,2 L8,7 L14.5,2" fill="none" stroke="#2062e6" stroke-width="1" opacity=".5"/>
  </svg>
  <div class="it" style="left:1413px;top:12px;font-size:14px;line-height:16px;color:rgba(255,255,255,.72)">消息</div>
  <div class="dot" style="left:1441px;top:10px"></div>
</div>

</body></html>
